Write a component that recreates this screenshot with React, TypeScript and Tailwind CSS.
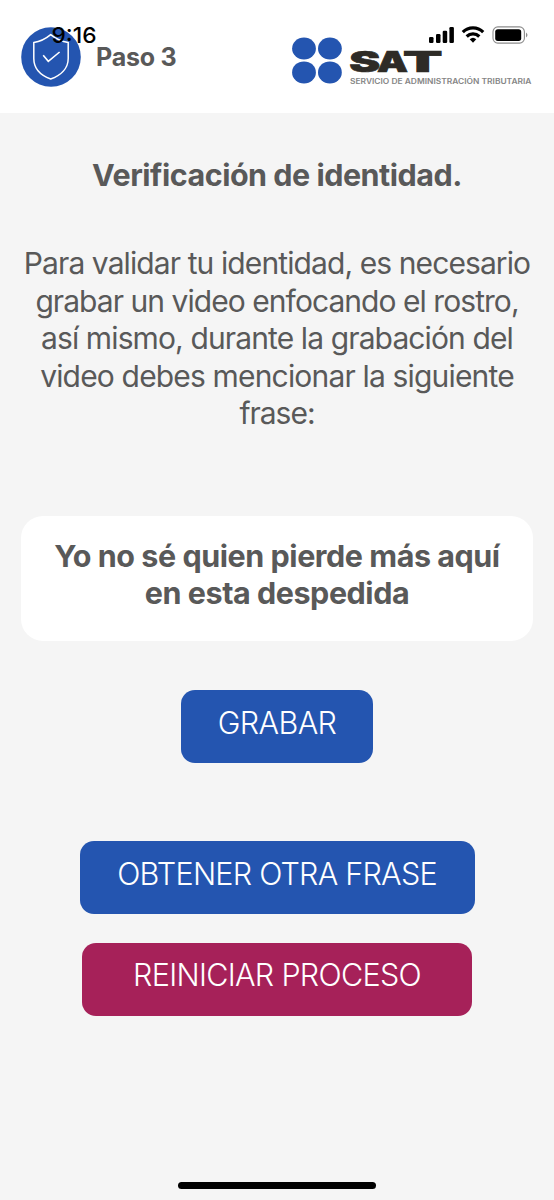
import clsx from "clsx";

const message = [
  { text: "Para validar tu identidad, es necesario", spacing: "tracking-[-0.9px]" },
  { text: "grabar un video enfocando el rostro,", spacing: "tracking-[-0.95px]" },
  { text: "así mismo, durante la grabación del", spacing: "tracking-[-0.88px]" },
  { text: "video debes mencionar la siguiente", spacing: "tracking-[-0.83px]" },
  { text: "frase:", spacing: "tracking-[-1px]" },
];

function StatusBar() {
  return (
    <div className="absolute inset-x-0 top-0 h-12">
      <svg viewBox="0 0 554 48" className="w-full h-full">
        <text
          x="51.5"
          y="43"
          fontSize="22"
          fontWeight="550"
          textLength="45"
          lengthAdjust="spacingAndGlyphs">
          9:16
        </text>
        <rect x="429" y="37" width="4.5" height="6" rx="1.2" />
        <rect x="436" y="34" width="4.5" height="9" rx="1.2" />
        <rect x="442.7" y="30.7" width="4.5" height="12.3" rx="1.2" />
        <rect x="449.4" y="27" width="4.5" height="16" rx="1.2" />
        <g fill="none" stroke="#000" strokeWidth="3.2">
          <path d="M462.8 32.2a14.4 14.4 0 0 1 20.4 0" />
          <path d="M466.7 36.5a8.9 8.9 0 0 1 12.6 0" />
        </g>
        <path d="M473 42.8l-3.3-3.5a4.8 4.8 0 0 1 6.6 0z" />
        <rect x="493" y="26.9" width="31.4" height="16.2" rx="4.8" fill="none" stroke="#8c8c8c" strokeWidth="1.1" />
        <rect x="495.2" y="29.2" width="26" height="11.7" rx="2.6" />
        <path d="M526 32.5q3 2.5 0 5z" fill="#8c8c8c" />
      </svg>
    </div>
  );
}

function ShieldBadge() {
  return (
    <svg viewBox="0 0 60 60" className="size-[60px]" fill="none" stroke="#fff" strokeWidth="1.5">
      <circle cx="30" cy="30" r="29.8" fill="#2455b0" stroke="none" />
      <path d="M29.7 7.7C24.5 12 19 14.7 12.8 15.6V31.5C12.8 41.5 20 48.5 29.7 52C39.5 48.5 47.2 41.5 47.2 31.5V15.6C41 14.7 35 12 29.7 7.7Z" />
      <path d="M22.2 28.2L27.3 34.3L38.6 25" strokeWidth="1.6" />
    </svg>
  );
}

function SatLogo() {
  return (
    <svg viewBox="0 0 242 50" className="w-[242px] h-[50px]">
      <g fill="#2455b0">
        <ellipse cx="12" cy="11.5" rx="11.9" ry="11" />
        <ellipse cx="37.9" cy="11.5" rx="11.9" ry="11" />
        <ellipse cx="12" cy="35.4" rx="11.9" ry="11" />
        <ellipse cx="37.9" cy="35.4" rx="11.9" ry="11" />
      </g>
      <text y="34.6" fontSize="29" fontWeight="900" fill="#2e2b26" stroke="#2e2b26" strokeWidth="0.7">
        <tspan x="57.3" textLength="31" lengthAdjust="spacingAndGlyphs">S</tspan>
        <tspan x="85" textLength="31" lengthAdjust="spacingAndGlyphs">A</tspan>
        <tspan x="111" textLength="39.5" lengthAdjust="spacingAndGlyphs">T</tspan>
      </text>
      <text
        x="58"
        y="46.7"
        fontSize="7.2"
        fontWeight="600"
        fill="#858585"
        textLength="181.5"
        lengthAdjust="spacingAndGlyphs">
        SERVICIO DE ADMINISTRACIÓN TRIBUTARIA
      </text>
    </svg>
  );
}

function Button({ label, className }: { label: string; className: string }) {
  return (
    <button
      type="button"
      className={clsx(
        "h-[73px] rounded-[14px] pb-2 font-[350] text-white whitespace-nowrap flex items-center justify-center",
        className
      )}>
      {label}
    </button>
  );
}

export default function App() {
  return (
    <div className="relative h-[1200px] flex flex-col bg-[#f5f5f5] text-[#595959] text-[30.5px] leading-[37.4px] font-['Inter',sans-serif]">
      <header className="h-[113px] bg-white flex items-start justify-between pl-[21px] pr-5">
        <div className="flex items-center gap-[15px] pt-[27px]">
          <ShieldBadge />
          <span className="pt-0.5 text-[25px] font-bold tracking-[-0.25px]">Paso 3</span>
        </div>
        <div className="pt-[37px]">
          <SatLogo />
        </div>
      </header>

      <main className="flex flex-col items-center text-center">
        <h1 className="mt-[43px] font-bold tracking-[-0.5px]">Verificación de identidad.</h1>

        <p className="mt-[52px] flex flex-col items-center text-[30px] whitespace-nowrap">
          {message.map((line) => (
            <span key={line.text} className={line.spacing}>
              {line.text}
            </span>
          ))}
        </p>

        <div className="mt-[83.6px] w-[512px] h-[125px] rounded-[22px] bg-white pt-[21px] font-bold whitespace-nowrap">
          <p className="tracking-[-0.46px]">Yo no sé quien pierde más aquí</p>
          <p className="tracking-[-0.46px]">en esta despedida</p>
        </div>

        <Button label="GRABAR" className="mt-[49px] w-48 bg-[#2455b0] tracking-[-0.6px]" />
        <Button label="OBTENER OTRA FRASE" className="mt-[78px] w-[395px] bg-[#2455b0] tracking-[-0.75px]" />
        <Button label="REINICIAR PROCESO" className="mt-[28.5px] w-[390px] bg-[#a62159] tracking-[-0.7px]" />
      </main>

      <div className="mt-auto mb-[11.5px] mx-auto w-[198px] h-[7px] rounded-full bg-black" />

      <StatusBar />
    </div>
  );
}
